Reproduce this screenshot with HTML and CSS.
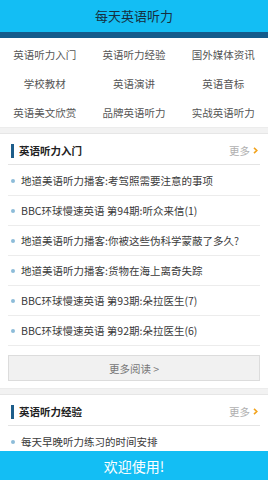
FILE: index.html
```html
<!DOCTYPE html>
<html lang="zh-CN">
<head>
<meta charset="utf-8">
<title>每天英语听力</title>
<link rel="stylesheet" href="styles.css">
</head>
<body>
<header class="topbar">
  <div class="topbar-title">每天英语听力</div>
</header>
<nav class="cats">
  <a>英语听力入门</a><a>英语听力经验</a><a>国外媒体资讯</a>
  <a>学校教材</a><a>英语演讲</a><a>英语音标</a>
  <a>英语美文欣赏</a><a>品牌英语听力</a><a>实战英语听力</a>
</nav>
<div class="band"></div>
<section class="block">
  <div class="block-head">
    <h2 class="block-title">英语听力入门</h2>
    <span class="more">更多<svg class="chev" width="5" height="7" viewBox="0 0 5 7"><path d="M1 0.8 L3.8 3.5 L1 6.2" fill="none" stroke="#f2a31c" stroke-width="1.6"/></svg></span>
  </div>
  <ul class="list">
    <li>地道美语听力播客:考驾照需要注意的事项</li>
    <li>BBC环球慢速英语 第94期:听众来信(1)</li>
    <li>地道美语听力播客:你被这些伪科学蒙蔽了多久?</li>
    <li>地道美语听力播客:货物在海上离奇失踪</li>
    <li>BBC环球慢速英语 第93期:朵拉医生(7)</li>
    <li>BBC环球慢速英语 第92期:朵拉医生(6)</li>
  </ul>
  <div class="more-btn">更多阅读 &gt;</div>
</section>
<div class="band"></div>
<section class="block">
  <div class="block-head">
    <h2 class="block-title">英语听力经验</h2>
    <span class="more">更多<svg class="chev" width="5" height="7" viewBox="0 0 5 7"><path d="M1 0.8 L3.8 3.5 L1 6.2" fill="none" stroke="#f2a31c" stroke-width="1.6"/></svg></span>
  </div>
  <ul class="list">
    <li>每天早晚听力练习的时间安排</li>
  </ul>
</section>
<footer class="welcome">欢迎使用!</footer>
</body>
</html>
```

FILE: styles.css
```css
* { box-sizing: border-box; }
html, body { margin: 0; padding: 0; }
body {
  background: #fff;
  font-family: "Noto Sans CJK SC", "Noto Sans", sans-serif;
  color: #333;
  overflow: hidden;
  height: 480px;
}
.topbar {
  height: 38px;
  background: #13bef4;
  border-bottom: 6px solid #145c8c;
  display: flex;
  align-items: center;
  justify-content: center;
}
.topbar-title {
  font-size: 13px;
  line-height: 32px;
  color: #162f40;
}
.cats {
  display: grid;
  grid-template-columns: repeat(3, 1fr);
  grid-auto-rows: 29px;
  padding-top: 2px;
}
.cats a {
  display: flex;
  align-items: center;
  justify-content: center;
  font-size: 10.5px;
  color: #555;
}
.band {
  height: 7px;
  background: #f2f2f2;
  border-top: 1px solid #ececec;
  border-bottom: 1px solid #e6e6e6;
}
.block {
  padding: 0 8px;
}
.block-head {
  display: flex;
  align-items: center;
  justify-content: space-between;
  height: 31px;
  padding-top: 3px;
  border-bottom: 1px solid #e4e4e4;
}
.block-title {
  margin: 0;
  font-size: 10.5px;
  font-weight: bold;
  color: #222;
  line-height: 14px;
  border-left: 3px solid #1d5d8a;
  padding-left: 5px;
  margin-left: 3px;
}
.more {
  font-size: 10.5px;
  color: #b0b0b0;
  display: flex;
  align-items: center;
  gap: 3px;
  margin-right: 2px;
}
.chev { display: block; }
.list {
  list-style: none;
  margin: 0;
  padding: 1px 0 0;
}
.list li {
  height: 30px;
  display: flex;
  align-items: center;
  font-size: 10.5px;
  color: #3a3a3a;
  border-bottom: 1px solid #ececec;
  padding-left: 3px;
}
.list li::before {
  content: "";
  width: 4px;
  height: 4px;
  border-radius: 50%;
  background: #8dbcd9;
  margin-right: 6px;
  flex: none;
}
.more-btn {
  margin: 9px 0 7px;
  height: 26px;
  border: 1px solid #dcdcdc;
  background: #f1f1f1;
  display: flex;
  align-items: center;
  justify-content: center;
  font-size: 10.5px;
  color: #777;
}
.welcome {
  position: fixed;
  left: 0;
  right: 0;
  bottom: 0;
  height: 29px;
  background: #13bef4;
  color: #fff;
  font-size: 14px;
  display: flex;
  align-items: center;
  justify-content: center;
}
```
